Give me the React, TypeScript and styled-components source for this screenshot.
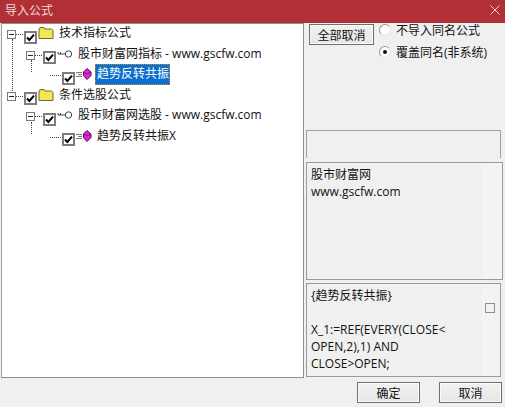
import React from "react";
import styled, { createGlobalStyle } from "styled-components";

const GlobalStyle = createGlobalStyle`
  html, body {
    margin: 0;
    padding: 0;
    background: #f0f0f0;
  }
  * { box-sizing: border-box; }
`;

const FONT = `"Open Sans", "Noto Sans CJK SC", sans-serif`;

const Dialog = styled.div`
  width: 505px;
  height: 407px;
  display: flex;
  flex-direction: column;
  background: #f0f0f0;
  color: #111;
  font-family: ${FONT};
  font-size: 12px;
  overflow: hidden;
`;

const TitleBar = styled.div`
  height: 23px;
  flex: none;
  display: flex;
  align-items: center;
  justify-content: space-between;
  padding: 0 5px 3px 5px;
  background: #b03035;
  color: #f3d9da;
  font-size: 12px;
`;

const Body = styled.div`
  flex: 1;
  display: flex;
  min-height: 0;
  padding-left: 1px;
`;

const TreePanel = styled.div`
  width: 303px;
  height: 355px;
  flex: none;
  padding: 0 0 0 6px;
  background: #fff;
  border: 1px solid #8e8e8e;
  border-left: 1px solid #a0a0a0;
`;

const TreeList = styled.div`
  position: relative;
  display: flex;
  flex-direction: column;
  margin-top: -1px;
`;

const Row = styled.div<{ $level: number }>`
  position: relative;
  height: 20.5px;
  display: flex;
  align-items: center;
  margin-left: ${(p) => p.$level * 19}px;
`;

const Expander = styled.span`
  position: absolute;
  left: -1px;
  top: 7px;
  width: 9px;
  height: 9px;
  background: #fff;
  border: 1px solid #7a7a7a;

  &::after {
    content: "";
    position: absolute;
    left: 1px;
    top: 3px;
    width: 5px;
    height: 1px;
    background: #222;
  }
`;

const DotsH = styled.span`
  position: absolute;
  left: 8px;
  top: 11px;
  width: 9px;
  border-top: 1px dotted #444;
`;

const DotsV = styled.span<{ $h: number; $left: number; $top: number }>`
  position: absolute;
  left: ${(p) => p.$left}px;
  top: ${(p) => p.$top}px;
  height: ${(p) => p.$h}px;
  border-left: 1px dotted #444;
`;

const Check = styled.span`
  flex: none;
  width: 13px;
  height: 13px;
  margin-left: 16px;
  display: flex;
  align-items: center;
  justify-content: center;
  background: #fff;
  border: 2px solid #7d7d7d;
  position: relative;
  top: 4px;
`;

const IconSlot = styled.span`
  flex: none;
  width: 16px;
  height: 14px;
  margin-left: 1px;
  display: flex;
  align-items: center;
`;

const Label = styled.span<{ $selected?: boolean }>`
  margin-left: ${(p) => (p.$selected ? "3px" : "5px")};
  padding: ${(p) => (p.$selected ? "2px 1px 3px 2px" : "0")};
  white-space: nowrap;
  font-size: 12px;
  line-height: 16px;
  color: ${(p) => (p.$selected ? "#fff" : "#111")};
  background: ${(p) => (p.$selected ? "#0c6fce" : "transparent")};
  outline: ${(p) => (p.$selected ? "1px dotted #d08a30" : "none")};
  outline-offset: -1px;
`;

const Side = styled.div`
  flex: 1;
  display: flex;
  flex-direction: column;
  padding: 0 2px 0 2px;
  min-width: 0;
`;

const Options = styled.div`
  height: 107px;
  flex: none;
  display: flex;
  align-items: flex-start;
  gap: 5px;
  padding-left: 3px;
  padding-top: 1px;
`;

const Button = styled.button<{ $w: number; $h: number }>`
  width: ${(p) => p.$w}px;
  height: ${(p) => p.$h}px;
  padding: 0;
  flex: none;
  font-family: ${FONT};
  font-size: 12px;
  color: #111;
  border: 1px solid #707070;
  background: linear-gradient(#f2f2f2, #e6e6e6);
  box-shadow: inset 0 0 0 1px #fafafa;
`;

const RadioGroup = styled.div`
  display: flex;
  flex-direction: column;
  gap: 8px;
  margin-top: -1px;
`;

const RadioRow = styled.label`
  height: 14px;
  display: flex;
  align-items: center;
  gap: 5px;
  white-space: nowrap;
`;

const RadioDot = styled.span<{ $on?: boolean }>`
  position: relative;
  width: 12px;
  height: 12px;
  flex: none;
  border-radius: 50%;
  background: #fff;
  border: 1px solid #9a9a9a;
  border-right-color: #e4e4e4;
  border-bottom-color: #e4e4e4;

  &::after {
    content: "";
    display: ${(p) => (p.$on ? "block" : "none")};
    position: absolute;
    left: 3px;
    top: 3px;
    width: 4px;
    height: 4px;
    border-radius: 50%;
    background: #111;
  }
`;

const GroupBar = styled.div`
  height: 28px;
  width: 195px;
  flex: none;
  border: 1px solid #a0a0a0;
  border-bottom: none;
  background: #f0f0f0;
`;

const TextBox = styled.div<{ $h: number; $w: number; $gap: number }>`
  position: relative;
  height: ${(p) => p.$h}px;
  width: ${(p) => p.$w}px;
  flex: none;
  margin-top: ${(p) => p.$gap}px;
  padding: 3px 4px 2px;
  border: 1px solid #9a9a9a;
  background: linear-gradient(to right, #f0f0f0 175px, #f3f3f1 175px);
  font-size: 12px;
  line-height: 17px;
  white-space: pre-wrap;
`;

const Scroll = styled.span`
  position: absolute;
  right: 5px;
  top: 19px;
  width: 10px;
  height: 10px;
  border: 1px solid #8f8f8f;
  background: #f3f3f3;
`;

const Footer = styled.div`
  height: 29px;
  flex: none;
  display: flex;
  justify-content: flex-end;
  align-items: flex-start;
  gap: 19px;
  padding: 4px 3px 0 0;
`;

const CheckMark = () => (
  <svg width="9" height="9" viewBox="0 0 9 9">
    <path d="M1 4.5 L3.4 7 L8 1.6" fill="none" stroke="#000" strokeWidth="2" />
  </svg>
);

const Folder = () => (
  <svg width="16" height="14" viewBox="0 0 16 14">
    <path d="M1 3 L2 1.5 H6 L7 3 H13.5 L15 4.5 V12.5 H1 Z" fill="#eede3a" stroke="#6b6b3a" />
    <path d="M2 4 H14 V12 H2 Z" fill="#f5ec60" opacity="0.7" />
  </svg>
);

const KeyIcon = () => (
  <svg width="16" height="10" viewBox="0 0 16 10">
    <circle cx="11.5" cy="5" r="3.2" fill="#fff" stroke="#444" />
    <path d="M8.5 5 H1 M1 5 V3 M3.5 5 V3" fill="none" stroke="#444" />
  </svg>
);

const FormulaIcon = () => (
  <svg width="16" height="12" viewBox="0 0 16 12">
    <path d="M0 4.5 H6 M2 6.5 H6 M0 8.5 H6" stroke="#777" />
    <path d="M11 0.5 L15 4 V7.5 L11 11.5 L7.5 7.5 V4 Z" fill="#e81ed8" stroke="#43104a" />
    <path d="M8 4 L11 6 L15 4" fill="none" stroke="#7a1280" />
  </svg>
);

const TreeRow = ({
  level,
  label,
  icon,
  expander,
  selected,
}: {
  level: number;
  label: string;
  icon: React.ReactNode;
  expander?: boolean;
  selected?: boolean;
}) => (
  <Row $level={level}>
    {expander && <Expander />}
    <DotsH style={expander ? undefined : { left: 4, width: 13 }} />
    <Check>
      <CheckMark />
    </Check>
    <IconSlot>{icon}</IconSlot>
    <Label $selected={selected}>{label}</Label>
  </Row>
);

export default function App() {
  return (
    <Dialog>
      <GlobalStyle />
      <TitleBar>
        <span>导入公式</span>
        <svg width="10" height="10" viewBox="0 0 10 10">
          <path d="M0.5 0.5 L9.5 9.5 M9.5 0.5 L0.5 9.5" stroke="#f0d4d5" />
        </svg>
      </TitleBar>
      <Body>
        <TreePanel>
          <TreeList>
            <DotsV $left={4} $top={16} $h={60} />
            <DotsV $left={23} $top={37} $h={12} />
            <DotsV $left={23} $top={99} $h={12} />
            <TreeRow level={0} label="技术指标公式" icon={<Folder />} expander />
            <TreeRow level={1} label="股市财富网指标 - www.gscfw.com" icon={<KeyIcon />} expander />
            <TreeRow level={2} label="趋势反转共振" icon={<FormulaIcon />} selected />
            <TreeRow level={0} label="条件选股公式" icon={<Folder />} expander />
            <TreeRow level={1} label="股市财富网选股 - www.gscfw.com" icon={<KeyIcon />} expander />
            <TreeRow level={2} label="趋势反转共振X" icon={<FormulaIcon />} />
          </TreeList>
        </TreePanel>
        <Side>
          <Options>
            <Button $w={65} $h={21}>全部取消</Button>
            <RadioGroup>
              <RadioRow>
                <RadioDot />
                不导入同名公式
              </RadioRow>
              <RadioRow>
                <RadioDot $on />
                覆盖同名(非系统)
              </RadioRow>
            </RadioGroup>
          </Options>
          <GroupBar />
          <TextBox $h={118} $w={197} $gap={4}>{"股市财富网\nwww.gscfw.com"}</TextBox>
          <TextBox $h={94} $w={195} $gap={3}>
            {"{趋势反转共振}\n\nX_1:=REF(EVERY(CLOSE<\nOPEN,2),1) AND\nCLOSE>OPEN;"}
            <Scroll />
          </TextBox>
        </Side>
      </Body>
      <Footer>
        <Button $w={63} $h={21}>确定</Button>
        <Button $w={63} $h={21}>取消</Button>
      </Footer>
    </Dialog>
  );
}
